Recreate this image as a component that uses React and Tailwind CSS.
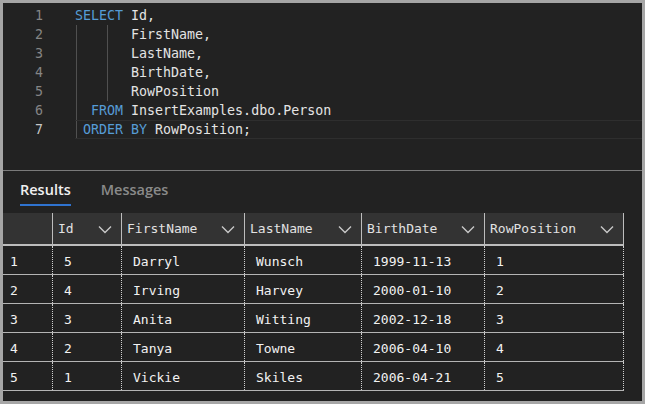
import { useState } from 'react';

const KW = 'text-[#569cd6]';
const ID = 'text-[#e4e4e4]';

// one entry per editor line: pieces and indent guides (in columns)
const codeLines = [
  { parts: [['SELECT ', KW], ['Id,', ID]], guides: [] },
  { parts: [['       FirstName,', ID]], guides: [0, 4] },
  { parts: [['       LastName,', ID]], guides: [0, 4] },
  { parts: [['       BirthDate,', ID]], guides: [0, 4] },
  { parts: [['       RowPosition', ID]], guides: [0, 4] },
  { parts: [['  FROM ', KW], ['InsertExamples.dbo.Person', ID]], guides: [0] },
  { parts: [[' ORDER BY ', KW], ['RowPosition;', ID]], guides: [0], active: true },
];

const columns = [
  { key: 'Id', width: 'w-[69px]' },
  { key: 'FirstName', width: 'w-[123px]' },
  { key: 'LastName', width: 'w-[117px]' },
  { key: 'BirthDate', width: 'w-[123px]' },
  { key: 'RowPosition', width: 'w-[139px]' },
];

const rows = [
  { Id: 5, FirstName: 'Darryl', LastName: 'Wunsch', BirthDate: '1999-11-13', RowPosition: 1 },
  { Id: 4, FirstName: 'Irving', LastName: 'Harvey', BirthDate: '2000-01-10', RowPosition: 2 },
  { Id: 3, FirstName: 'Anita', LastName: 'Witting', BirthDate: '2002-12-18', RowPosition: 3 },
  { Id: 2, FirstName: 'Tanya', LastName: 'Towne', BirthDate: '2006-04-10', RowPosition: 4 },
  { Id: 1, FirstName: 'Vickie', LastName: 'Skiles', BirthDate: '2006-04-21', RowPosition: 5 },
];

function Chevron() {
  return (
    <svg width="14" height="14" viewBox="0 0 14 14" className="shrink-0">
      <polyline points="1,4.5 7,10.5 13,4.5" fill="none" stroke="#c8c8c8" strokeWidth="1.4" />
    </svg>
  );
}

function Editor() {
  return (
    <div className="h-[168px] border-b border-[#7a7a7a] pt-[3px] font-['DejaVu_Sans_Mono',monospace] text-[13.3px]">
      {codeLines.map((line, i) => (
        <div key={i} className="flex h-[19px] leading-[19px]">
          <span
            className={`w-[40px] text-right ${line.active ? 'text-[#c6c6c6]' : 'text-[#858585]'}`}
          >
            {i + 1}
          </span>
          <div
            className={`relative ml-[32px] flex-1 whitespace-pre ${
              line.active ? 'border-y border-[#2e2e2e] leading-[17px]' : ''
            }`}
          >
            {line.guides.map((g) => (
              <span
                key={g}
                className={`absolute top-0 bottom-0 w-px bg-[#505050] ${g === 0 ? 'left-[1px]' : 'left-[32px]'}`}
              />
            ))}
            {line.parts.map(([text, cls], j) => (
              <span key={j} className={cls}>
                {text}
              </span>
            ))}
          </div>
        </div>
      ))}
    </div>
  );
}

function Tabs() {
  const [tab, setTab] = useState('Results');
  return (
    <div className="flex gap-[30px] pl-[17px] pt-[9px] h-[42px] font-['Open_Sans',sans-serif] text-[14.5px] font-semibold">
      {['Results', 'Messages'].map((t) => (
        <button
          key={t}
          onClick={() => setTab(t)}
          className="flex flex-col items-start"
        >
          <span className={`leading-[20px] ${tab === t ? 'text-[#f0f0f0]' : 'text-[#8a8a8a]'}`}>{t}</span>
          <span className={`mt-[4px] h-[2px] w-full ${tab === t ? 'bg-[#2f73cf]' : ''}`} />
        </button>
      ))}
    </div>
  );
}

function Grid() {
  return (
    <div className="font-['DejaVu_Sans_Mono',monospace] text-[13px]">
      <div className="flex h-[33px] w-[621px] bg-[#333333] border-b-2 border-[#bdbdbd] text-[#e2e2e2]">
        <div className="w-[50px] border-r border-[#bdbdbd]" />
        {columns.map((c) => (
          <div
            key={c.key}
            className={`${c.width} flex items-center justify-between pl-[5px] pr-[9px] border-r border-[#bdbdbd]`}
          >
            <span>{c.key}</span>
            <Chevron />
          </div>
        ))}
      </div>
      {rows.map((r, i) => (
        <div key={i} className="flex h-[29px] w-[621px] border-b border-[#b4b4b4] text-[#f2f2f2]">
          <div className="w-[50px] flex items-center pt-[4px] pl-[7px] border-r border-dotted border-[#d0d0d0]">
            {i + 1}
          </div>
          {columns.map((c) => (
            <div
              key={c.key}
              className={`${c.width} flex items-center pt-[4px] pl-[11px] border-r border-dotted border-[#d0d0d0]`}
            >
              {r[c.key]}
            </div>
          ))}
        </div>
      ))}
    </div>
  );
}

export default function App() {
  return (
    <div className="w-[645px] h-[404px] border-[3px] border-[#a6a6a6] bg-[#222222] flex flex-col overflow-hidden">
      <Editor />
      <Tabs />
      <Grid />
    </div>
  );
}
